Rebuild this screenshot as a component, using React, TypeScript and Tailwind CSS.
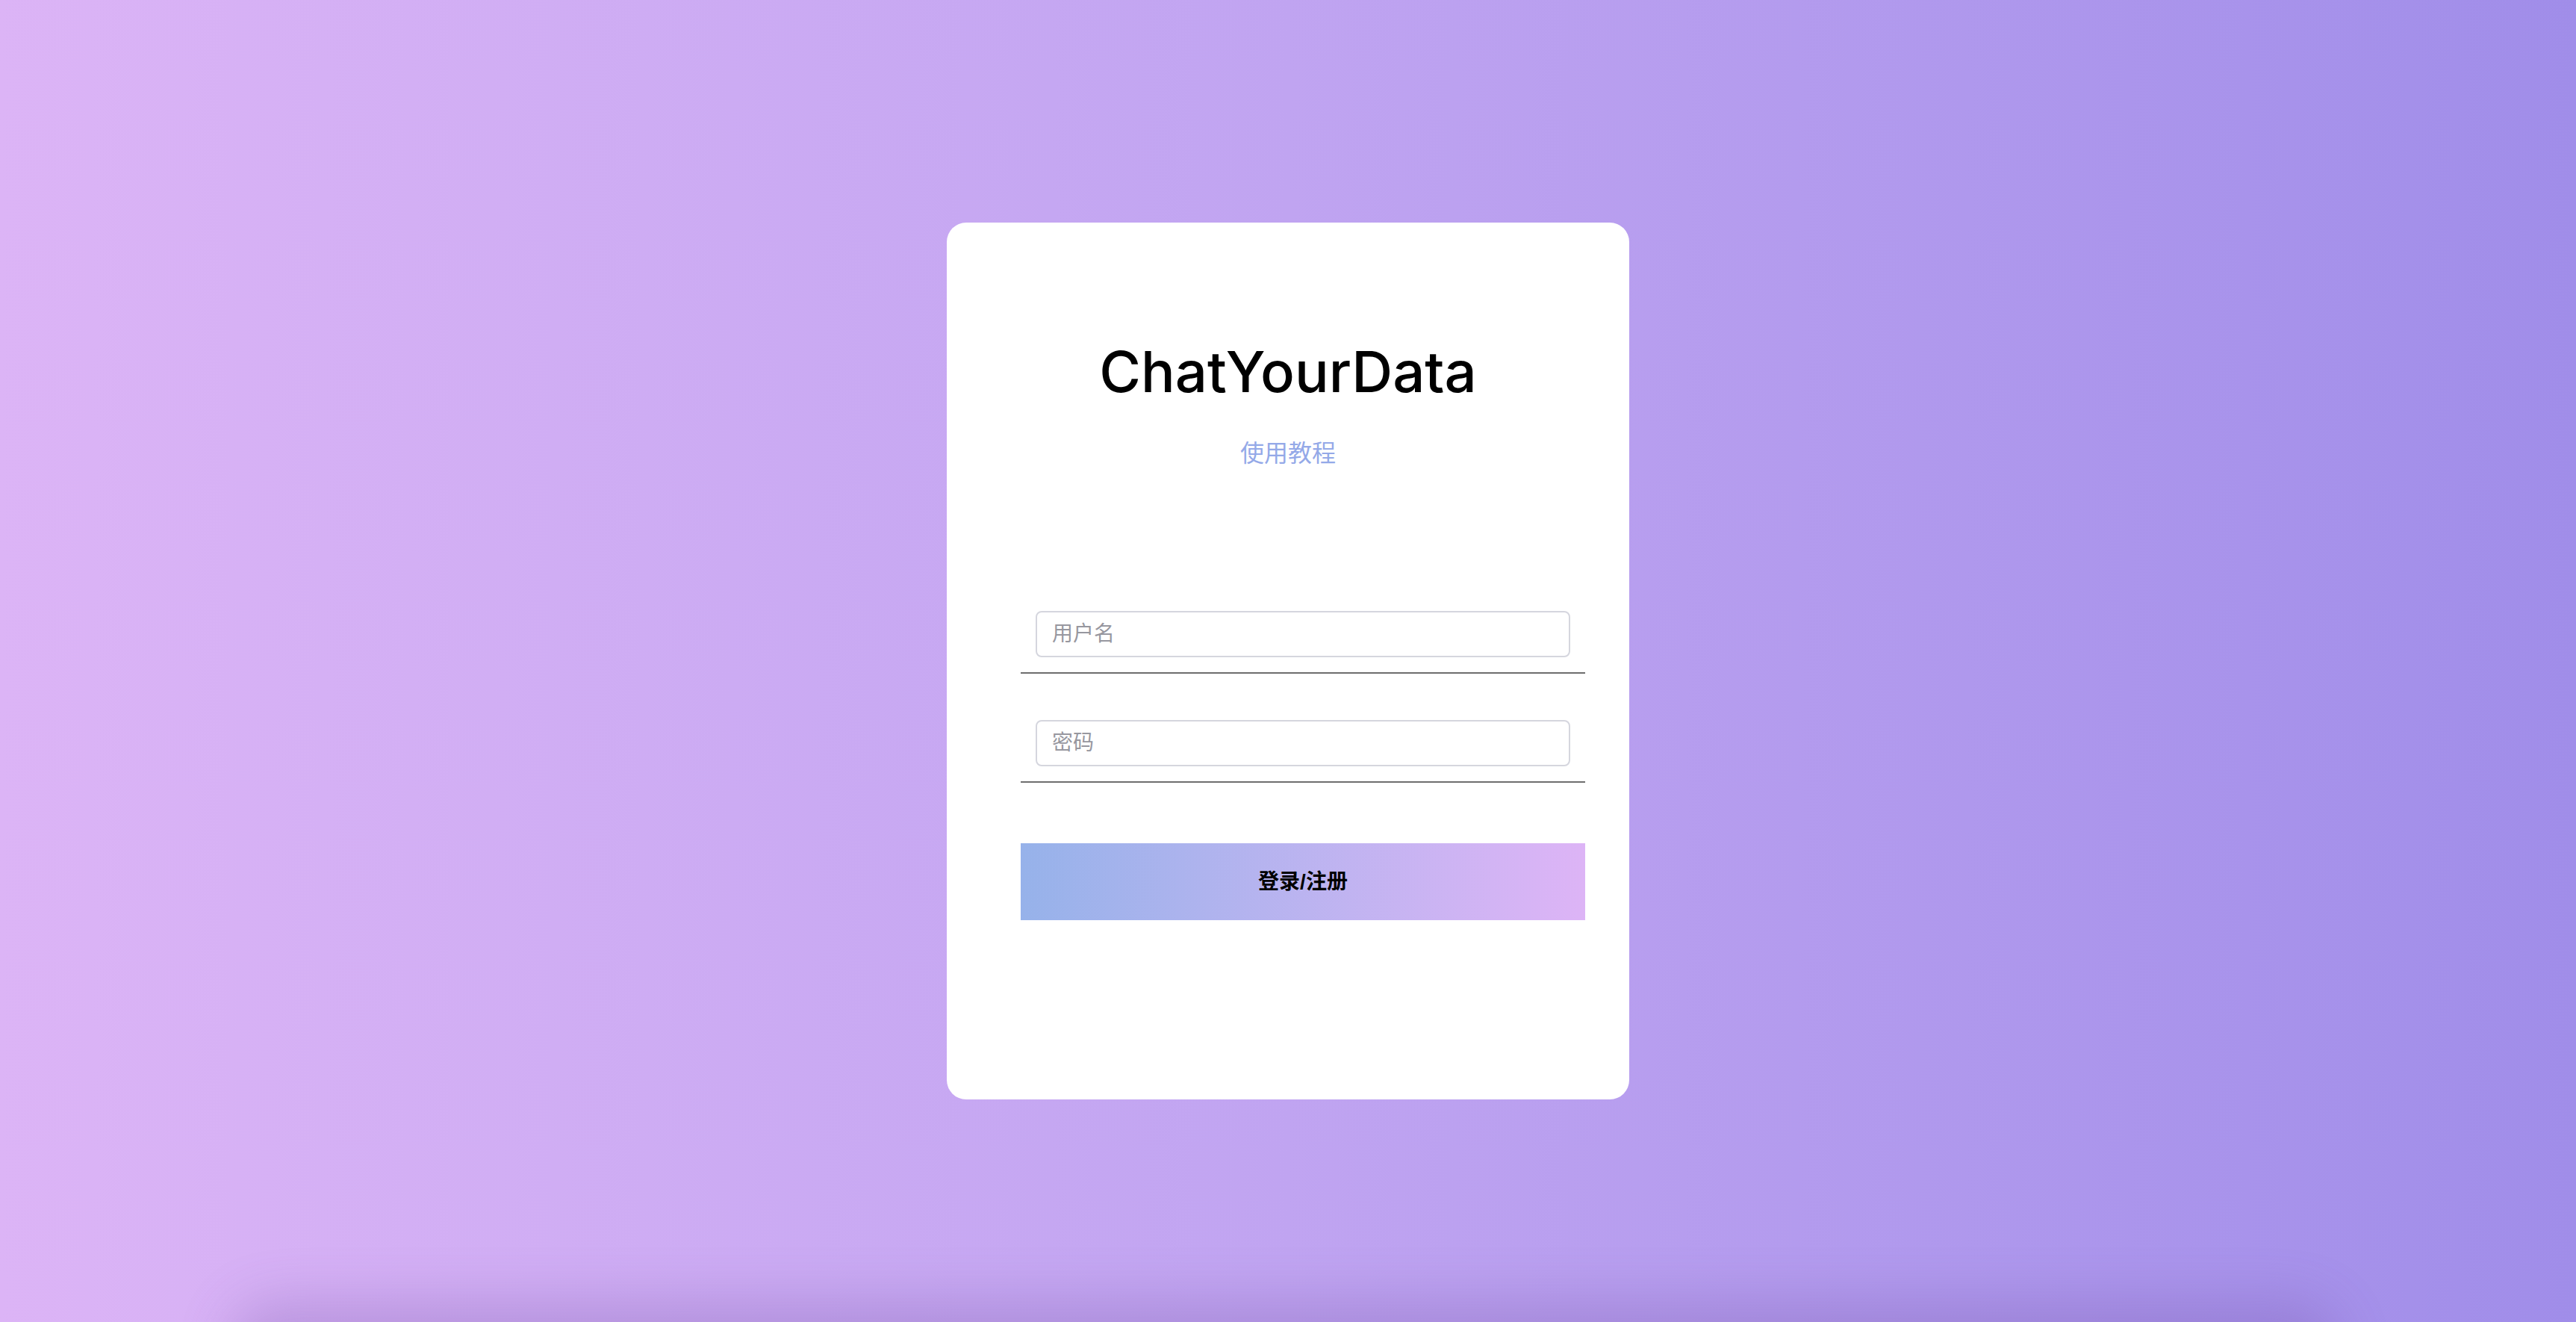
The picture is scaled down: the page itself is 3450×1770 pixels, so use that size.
import { useState } from 'react'

const font = "font-['Liberation_Sans','Noto_Sans_CJK_SC',sans-serif]"

export default function App() {
  const [username, setUsername] = useState('')
  const [password, setPassword] = useState('')

  return (
    <div
      className={`relative h-screen w-full overflow-hidden bg-linear-to-r from-[#dcb4f6] via-[#c0a4f1] to-[#a08de9] flex items-center justify-center ${font}`}
    >
      {/* soft shadow peeking up from below the fold */}
      <div className="absolute left-[330px] right-[340px] top-full h-[200px] rounded-[40px] shadow-[0_-6px_70px_20px_rgba(110,80,160,0.28)]" />

      <div className="relative w-[914px] h-[1174px] bg-white rounded-[26px] flex flex-col pt-[154px]">
        <h1 className="text-center font-['Inter',sans-serif] text-[76px] leading-[90px] text-black font-medium">
          ChatYourData
        </h1>
        <a className="mt-[49px] self-center text-[32px] leading-[32px] text-[#94a9e8] cursor-pointer">
          使用教程
        </a>

        <form className="mt-[195px] ml-[99px] w-[756px]" onSubmit={(e) => e.preventDefault()}>
          <div className="px-[20px] pb-[20px] border-b-2 border-[#6e6e6e]">
            <input
              value={username}
              onChange={(e) => setUsername(e.target.value)}
              placeholder="用户名"
              className={`block w-full h-[62px] rounded-[8px] border-2 border-[#d5d6de] pl-[20px] text-[28px] text-black placeholder:text-[#97979f] outline-none ${font}`}
            />
          </div>
          <div className="mt-[62px] px-[20px] pb-[20px] border-b-2 border-[#6e6e6e]">
            <input
              type="password"
              value={password}
              onChange={(e) => setPassword(e.target.value)}
              placeholder="密码"
              className={`block w-full h-[62px] rounded-[8px] border-2 border-[#d5d6de] pl-[20px] text-[28px] text-black placeholder:text-[#97979f] outline-none ${font}`}
            />
          </div>
          <button
            type="submit"
            className={`mt-[81px] w-full h-[103px] bg-linear-to-r from-[#96b2ea] to-[#ddb4f6] text-black text-[28px] font-bold ${font}`}
          >
            登录/注册
          </button>
        </form>
      </div>
    </div>
  )
}
